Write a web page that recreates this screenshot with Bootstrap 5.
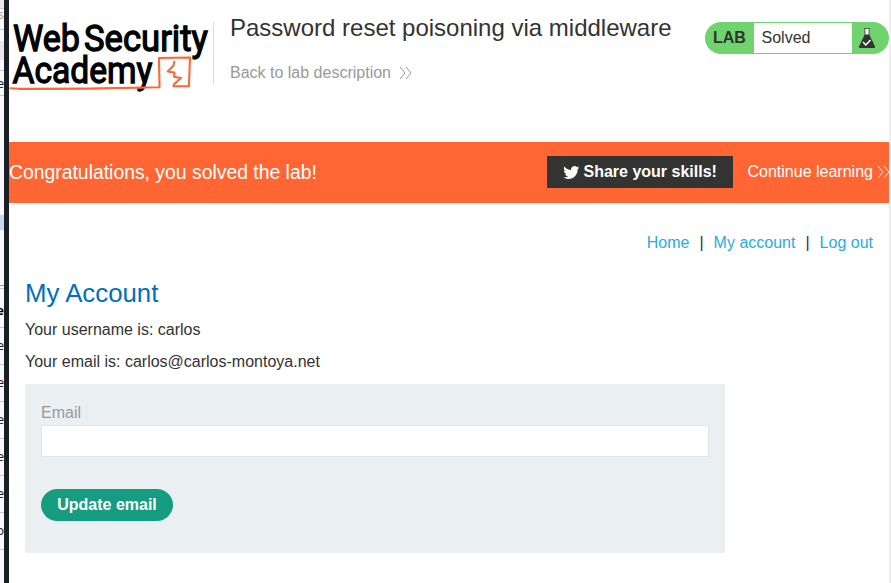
<!DOCTYPE html>
<html lang="en">
<head>
<meta charset="utf-8">
<meta name="viewport" content="width=device-width, initial-scale=1">
<title>Password reset poisoning via middleware</title>
<link href="https://cdn.jsdelivr.net/npm/bootstrap@5.3.0/dist/css/bootstrap.min.css" rel="stylesheet">
<style>
body{font:16px/24px "Liberation Sans",Arial,sans-serif;color:#333332;height:583px;overflow:hidden}
a{text-decoration:none}
.edge{width:4px;background:#f8f8fd;font:12px/1 "Noto Sans",sans-serif;color:#222}
.edge>div{height:37px;border-bottom:1px solid #c8c8cc;flex:none;display:flex;align-items:center;justify-content:flex-end;overflow:hidden}
.edge .top-a{height:9px;background:#e7e7ea}
.edge .top-b{height:21px;color:#aaa;align-items:flex-start}
.edge .top-c{height:11px;border:0}
.edge .top-d{height:19px;background:#e7e7e8;border:0}
.edge .top-e{height:11px}
.edge .top-f{height:25px;padding-top:2px}
.edge .gap-a{height:119px;border:0}
.edge .pick{height:15px;background:#c5d6f0;border:0}
.edge .gap-b{height:56px;border-color:#999}
.edge .gap-c{height:3px}
.edge .head-row{height:39px;font-weight:700;color:#000;padding-top:5px}
.divider{width:5px;background:#1c1e26}
.page{width:880px;background:#fff}
.scroll{width:2px;background:#eee}
.top-bar{height:142px}
.logo{width:205px;height:100px}
.title-box{margin-top:22px;height:62px;border-left:1px solid #ddd;padding-left:16px;width:492px;margin-left:-1px}
.title-box h1{font-size:24px;line-height:28px;margin:-8px 0 0}
.back{color:#999;margin-top:19px}
.status{margin-top:22px;width:184px;height:32px;border-radius:16px;background:#70d36e}
.status .tag{width:49px;padding-left:8px;font-weight:700;line-height:32px}
.status .state{width:98px;height:30px;margin-top:1px;background:#fff;padding-left:7.5px;line-height:30px}
.solved{height:61px;background:#f63;color:#fff;padding-bottom:1px}
.solved h4{font-size:19.36px;line-height:24px;margin:0;width:538px}
.share{width:186px;height:32px;background:#333332;color:#fff;font-weight:700;padding-left:16px}
.more{color:#fff;margin-left:14.5px}
.links{height:39px;margin-top:20px;margin-right:16px}
.links a{color:#29abe2}
.links .sep{width:24.2px;text-align:center}
.account{padding-left:16px}
.account h2{font-size:25.8px;line-height:32px;color:#0070bc;margin:15px 0 10px}
.account p{line-height:22px;margin-bottom:10px}
.account p+p{margin-bottom:11px}
.form-box{width:700px;height:169px;background:#eaf0f2;padding:17px 16px}
.form-box label{color:#999;display:block}
.form-box .form-control{height:32px;border:1px solid #e0e4e6;border-radius:0}
.update{width:132px;height:32px;margin-top:32px;border:0;border-radius:16px;background:#169c80;color:#fff;font-weight:700;padding:0}
</style>
</head>
<body>
<div class="d-flex h-100">
<aside class="edge d-flex flex-column flex-shrink-0 overflow-hidden">
<div class="top-a"></div><div class="top-b">s</div><div class="top-c"></div><div class="top-d"></div><div class="top-e"></div><div class="top-f">e</div>
<div class="gap-a"></div><div class="pick"></div><div class="gap-b"></div><div class="gap-c"></div>
<div class="head-row">e</div><div>e</div><div>e</div><div>e</div><div>e</div><div>e</div><div>o</div>
</aside>
<div class="divider flex-shrink-0"></div>
<main class="page flex-shrink-0 overflow-hidden">
<header class="top-bar d-flex">
<svg class="logo flex-shrink-0" viewBox="9 0 205 100" role="img" aria-label="Web Security Academy">
<g font-family="Roboto,sans-serif" font-size="37.5" font-weight="400" fill="#000" stroke="#000" stroke-width="1.3">
<text x="13" y="50.500" textLength="67" lengthAdjust="spacingAndGlyphs">Web</text>
<text x="84" y="50.500" textLength="124" lengthAdjust="spacingAndGlyphs">Security</text>
<text x="12.5" y="82.800" textLength="140" lengthAdjust="spacingAndGlyphs">Academy</text>
</g>
<g fill="none" stroke="#f63" stroke-linejoin="round">
<path d="M9.5 88.3 20 88.8 90 88.5 159.500 87.200 159 58 190 57.500 188.900 86.300 173.500 86.300 174 84.300 181 78 174 76.700 174.500 72.500 167.700 71.500 173.500 65.500 174.500 61" stroke-width="2.100"/>
<path d="M18 89.2 90 88.8 145 87.6" stroke-width="1.5"/>
</g>
</svg>
<div class="title-box flex-shrink-0"><h1 class="fw-normal">Password reset poisoning via middleware</h1>
<a class="back d-flex" href="#">Back to lab description <svg width="14" height="14" viewBox="0 0 14 14" class="ms-2 mt-1" fill="none" stroke="#999"><path d="m1 2 5 6-5 6M7 2l5 6-5 6"/></svg></a></div>
<div class="status d-flex flex-shrink-0"><span class="tag">LAB</span><span class="state">Solved</span>
<svg width="37" height="32" viewBox="0 0 37 32"><path d="M13 12h4l6 12.500q.5 1.500-1 1.500H8q-1.500 0-1-1.500z" fill="#333332"/><path d="M13.200 7h3.600v5.500h-3.600z" fill="#fff"/><path d="M12 6.500h6M12.900 7v6M17.100 7v6" stroke="#555" stroke-width=".9" fill="none"/><path d="m11 20 2.800 3 4.700-5" fill="none" stroke="#fff" stroke-width="1.5"/></svg></div>
</header>
<section class="solved d-flex align-items-center">
<h4 class="fw-normal flex-shrink-0">Congratulations, you solved the lab!</h4>
<a class="share d-flex align-items-center flex-shrink-0" href="#"><svg class="me-1" width="16.5" height="16" viewBox="0 0 16 16" fill="#fff"><path d="M5.030 15c6.040 0 9.340-5 9.340-9.330l-.01-.43A6.700 6.700 0 0 0 16 3.540a6.500 6.500 0 0 1-1.890.520 3.300 3.300 0 0 0 1.450-1.820 6.500 6.500 0 0 1-2.090.790A3.280 3.280 0 0 0 7.880 6.030 9.300 9.300 0 0 1 1.110 2.600a3.290 3.290 0 0 0 1.020 4.380A3.300 3.300 0 0 1 .64 6.570v.04a3.290 3.290 0 0 0 2.630 3.220 3.200 3.200 0 0 1-.86.120l-.620-.06a3.290 3.290 0 0 0 3.070 2.280A6.600 6.600 0 0 1 0 13.530 9.300 9.300 0 0 0 5.030 15"/></svg>Share your skills!</a>
<a class="more d-flex align-items-center text-nowrap" href="#">Continue learning <svg class="flex-shrink-0 ms-1" width="14" height="14" viewBox="0 0 14 14" fill="none" stroke="#fff" stroke-opacity=".8"><path d="m1 1 5 6-5 6M7 1l5 6-5 6"/></svg></a>
</section>
<nav class="links d-flex justify-content-end align-items-center"><a href="#">Home</a><span class="sep">|</span><a href="#">My account</a><span class="sep">|</span><a href="#">Log out</a></nav>
<section class="account">
<h2 class="fw-normal">My Account</h2>
<p>Your username is: carlos</p>
<p>Your email is: carlos@carlos-montoya.net</p>
<form class="form-box"><label for="email">Email</label><input class="form-control" id="email" type="email"><button class="update btn" type="button">Update email</button></form>
</section>
</main>
<div class="scroll flex-shrink-0"></div>
</div>
<script src="https://cdn.jsdelivr.net/npm/bootstrap@5.3.0/dist/js/bootstrap.bundle.min.js"></script>
</body>
</html>
